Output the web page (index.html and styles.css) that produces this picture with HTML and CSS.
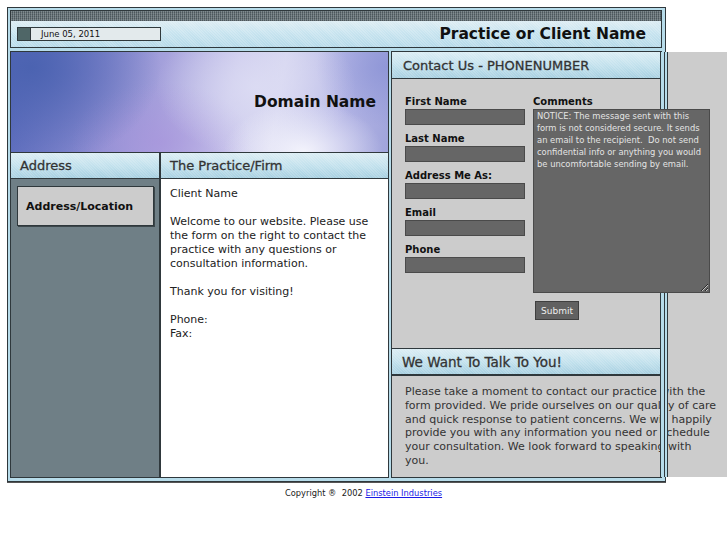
FILE: index.html
```html
<!DOCTYPE html>
<html>
<head>
<meta charset="utf-8">
<title>Practice or Client Name</title>
<link rel="stylesheet" href="styles.css">
</head>
<body>
<div class="page">
  <div class="frame">
    <div class="topbox">
      <div class="strip"></div>
      <div class="masthead">
        <div class="datebox"><span class="datesq"></span><span class="date">June 05, 2011</span></div>
        <h1 class="client">Practice or Client Name</h1>
      </div>
    </div>
    <div class="main">
      <div class="leftbox">
        <div class="banner"><h2 class="domain">Domain Name</h2></div>
        <div class="cols">
          <div class="addrcol">
            <div class="sechead">Address</div>
            <div class="addrbody"><div class="addrbox">Address/Location</div></div>
          </div>
          <div class="firmcol">
            <div class="sechead sechead-firm">The Practice/Firm</div>
            <div class="firmbody">
              <p>Client Name</p>
              <p>Welcome to our website. Please use the form on the right to contact the practice with any questions or consultation information.</p>
              <p>Thank you for visiting!</p>
              <p>Phone:<br>Fax:</p>
            </div>
          </div>
        </div>
      </div>
      <div class="rightbox">
        <div class="sechead sechead-right">Contact Us - PHONENUMBER</div>
        <form class="contact">
          <div class="fieldcol">
            <label class="lbl">First Name</label>
            <input class="field" type="text">
            <label class="lbl">Last Name</label>
            <input class="field" type="text">
            <label class="lbl">Address Me As:</label>
            <input class="field" type="text">
            <label class="lbl">Email</label>
            <input class="field" type="text">
            <label class="lbl">Phone</label>
            <input class="field" type="text">
          </div>
          <div class="commentcol">
            <label class="lbl">Comments</label>
            <textarea class="comments">NOTICE: The message sent with this form is not considered secure. It sends an email to the recipient.  Do not send confidential info or anything you would be uncomfortable sending by email.</textarea>
            <button class="submit" type="button">Submit</button>
          </div>
        </form>
        <div class="sechead sechead-right sechead-talk">We Want To Talk To You!</div>
        <div class="talkbody">
          <p>Please take a moment to contact our practice with the form provided. We pride ourselves on our quality of care and quick response to patient concerns. We will happily provide you with any information you need or schedule your consultation. We look forward to speaking with you.</p>
        </div>
      </div>
    </div>
  </div>
  <div class="sidestrip"></div>
</div>
<p class="footer">Copyright &reg;&nbsp; 2002 <a href="#">Einstein Industries</a></p>
</body>
</html>
```

FILE: styles.css
```css
* { box-sizing: border-box; }

body {
  margin: 0;
  background: #fff;
  color: #222;
  font-family: "DejaVu Sans", Verdana, sans-serif;
}

.page {
  display: flex;
  align-items: flex-start;
  padding: 7px 0 0 7px;
}

.frame {
  width: 659px;
  border: 1px solid #2f383c;
  background: #b7dcea;
  padding: 2px 3px 3px 2px;
  box-shadow: 0 1px 0 #555;
}

.topbox {
  border: 1px solid #2f383c;
}

.strip {
  height: 10px;
  background-color: #5d6a70;
  background-image:
    repeating-linear-gradient(90deg, rgba(255,255,255,.22) 0 1px, transparent 1px 2px),
    repeating-linear-gradient(0deg, rgba(0,0,0,.18) 0 1px, transparent 1px 2px);
}

.masthead {
  height: 26px;
  display: flex;
  align-items: center;
  justify-content: space-between;
  padding: 0 15px 0 6px;
  background-color: #c3e1ed;
  background-image:
    repeating-linear-gradient(45deg, rgba(255,255,255,.18) 0 1px, transparent 1px 2px),
    linear-gradient(180deg, #dcecf3 0%, #c6e3ef 50%, #b6dae9 100%);
}

.datebox {
  display: flex;
  width: 144px;
  height: 14px;
  border: 1px solid #30393c;
}

.datesq {
  width: 13px;
  background: #4f6667;
  border-right: 1px solid #30393c;
}

.date {
  flex: 1;
  background: #e3eaec;
  padding-left: 10px;
  font-size: 8.5px;
  line-height: 12px;
  color: #111;
}

.client {
  margin: 0;
  font-size: 15.5px;
  font-weight: bold;
  color: #111;
}

.main {
  display: flex;
  gap: 2px;
  margin-top: 3px;
}

.leftbox {
  width: 379px;
  height: 427px;
  border: 1px solid #2f383c;
  display: flex;
  flex-direction: column;
}

.banner {
  height: 101px;
  flex: none;
  border-bottom: 1px solid #2f383c;
  display: flex;
  align-items: center;
  justify-content: flex-end;
  padding-right: 12px;
  background:
    radial-gradient(ellipse 80px 50px at 292px 100px, rgba(246,246,253,.95), rgba(246,246,253,0)),
    radial-gradient(ellipse 100px 70px at 245px 35px, rgba(222,222,244,.8), rgba(222,222,244,0)),
    radial-gradient(ellipse 130px 100px at 20px 15px, rgba(74,98,176,.95), rgba(74,98,176,0)),
    radial-gradient(ellipse 90px 60px at 150px 90px, rgba(168,148,220,.7), rgba(168,148,220,0)),
    radial-gradient(ellipse 70px 60px at 375px 15px, rgba(140,148,214,.85), rgba(140,148,214,0)),
    linear-gradient(100deg, #5a6bbc 0%, #8588cf 22%, #a6a2dc 40%, #cac8ec 58%, #d6d6f0 70%, #b6b7e6 86%, #a0a4db 100%);
}

.domain {
  margin: 0;
  font-size: 15.5px;
  font-weight: bold;
  color: #111;
}

.cols {
  flex: 1;
  display: flex;
}

.addrcol {
  width: 150px;
  border-right: 2px solid #2f383c;
  display: flex;
  flex-direction: column;
}

.firmcol {
  flex: 1;
  display: flex;
  flex-direction: column;
}

.sechead {
  height: 26px;
  flex: none;
  border-bottom: 1px solid #2f383c;
  display: flex;
  align-items: center;
  padding-left: 9px;
  font-size: 13px;
  color: #333;
  -webkit-text-stroke: 0.3px #333;
  background-color: #bcdce9;
  background-image:
    repeating-linear-gradient(45deg, rgba(255,255,255,.15) 0 1px, transparent 1px 2px),
    linear-gradient(180deg, #dbedf4 0%, #c0e0ec 55%, #a8d0e1 100%);
}

.sechead-firm { padding-left: 9px; }

.sechead-right {
  height: 27px;
  padding-left: 11px;
}

.sechead-talk {
  border-top: 1px solid #2f383c;
  padding-left: 10px;
  font-size: 13.5px;
}

.addrbody {
  flex: 1;
  background: #6f7f86;
  padding: 7px 0 0 6px;
}

.addrbox {
  width: 137px;
  height: 40px;
  border: 1px solid #2f383c;
  box-shadow: 1px 1px 0 #3c474b;
  background: #cccccc;
  display: flex;
  align-items: center;
  padding-left: 8px;
  font-size: 11px;
  font-weight: bold;
  color: #111;
}

.firmbody {
  flex: 1;
  background: #fff;
  padding: 8px 9px;
  font-size: 11px;
  line-height: 14px;
  color: #222;
}

.firmbody p {
  margin: 0 0 14px;
}

.rightbox {
  position: relative;
  width: 271px;
  height: 427px;
  border: 1px solid #2f383c;
  background: #cccccc;
  display: flex;
  flex-direction: column;
}

.rightbox::after {
  content: "";
  position: absolute;
  top: 0;
  bottom: 0;
  left: 100%;
  margin-left: -1px;
  width: 8px;
  background: linear-gradient(to right, #2f383c 0 1px, #b7dcea 1px 4px, #2f383c 4px 5px, #b7dcea 5px 7px, #2f383c 7px 8px);
  z-index: 1;
  pointer-events: none;
}

.contact {
  height: 269px;
  flex: none;
  margin: 0;
  display: flex;
  gap: 8px;
  padding: 17px 0 0 13px;
}

.fieldcol,
.commentcol {
  flex: none;
  display: flex;
  flex-direction: column;
  align-items: flex-start;
}

.fieldcol { width: 120px; }
.commentcol { width: 177px; }

.lbl {
  display: block;
  font-size: 10px;
  font-weight: bold;
  line-height: 12px;
  margin-bottom: 1px;
  color: #111;
}

.field {
  display: block;
  width: 120px;
  height: 16px;
  margin: 0 0 8px;
  padding: 0;
  background: #666;
  border: 1px solid #4a4a4a;
}

.comments {
  position: relative;
  z-index: 2;
  display: block;
  width: 177px;
  height: 184px;
  margin: 0;
  padding: 0 3px;
  background: #666;
  border: 1px solid #4a4a4a;
  color: #e4e4e4;
  font-family: "DejaVu Sans", Verdana, sans-serif;
  font-size: 8.4px;
  line-height: 12px;
}

.submit {
  margin: 8px 0 0 2px;
  width: 44px;
  height: 19px;
  padding: 0;
  background: #616161;
  border: 1px solid #3f3f3f;
  color: #eee;
  font-family: "DejaVu Sans", Verdana, sans-serif;
  font-size: 9px;
}

.talkbody {
  flex: 1;
  border-top: 1px solid #2f383c;
  padding: 9px 0 0 13px;
}

.talkbody p {
  margin: 0;
  width: 312px;
  font-size: 11px;
  line-height: 13.75px;
  color: #333;
}

.sidestrip {
  flex: none;
  width: 61px;
  height: 425px;
  margin-top: 45px;
  background: #cccccc;
}

.footer {
  margin: 5px 0 0;
  text-align: center;
  font-size: 8.3px;
  line-height: 12px;
  color: #222;
}

.footer a {
  color: #1a1ae6;
}
```
